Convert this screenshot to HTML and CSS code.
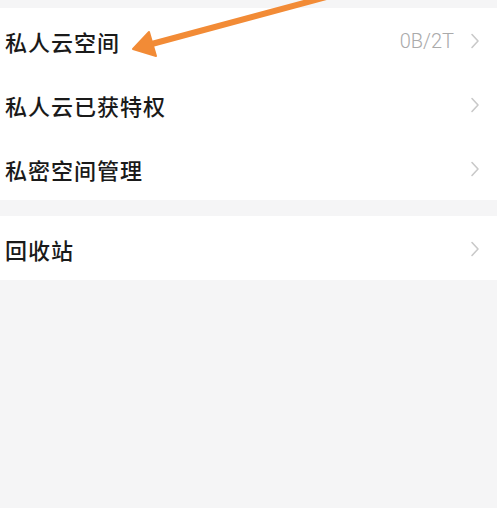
FILE: index.html
```html
<!DOCTYPE html>
<html lang="zh-CN">
<head>
<meta charset="utf-8">
<title>私人云</title>
<link rel="stylesheet" href="styles.css">
</head>
<body>
<div class="page">
  <div class="card">
    <div class="row">
      <span class="label">私人云空间</span>
      <span class="right"><span class="value">0B/2T</span><svg class="chev" viewBox="0 0 10 16" width="10" height="16"><path d="M2 1.5 L8 8 L2 14.5" fill="none" stroke="#c9c9c9" stroke-width="1.6" stroke-linecap="round" stroke-linejoin="round"/></svg></span>
    </div>
    <div class="row">
      <span class="label">私人云已获特权</span>
      <span class="right"><svg class="chev" viewBox="0 0 10 16" width="10" height="16"><path d="M2 1.5 L8 8 L2 14.5" fill="none" stroke="#c9c9c9" stroke-width="1.6" stroke-linecap="round" stroke-linejoin="round"/></svg></span>
    </div>
    <div class="row">
      <span class="label">私密空间管理</span>
      <span class="right"><svg class="chev" viewBox="0 0 10 16" width="10" height="16"><path d="M2 1.5 L8 8 L2 14.5" fill="none" stroke="#c9c9c9" stroke-width="1.6" stroke-linecap="round" stroke-linejoin="round"/></svg></span>
    </div>
  </div>
  <div class="card">
    <div class="row">
      <span class="label">回收站</span>
      <span class="right"><svg class="chev" viewBox="0 0 10 16" width="10" height="16"><path d="M2 1.5 L8 8 L2 14.5" fill="none" stroke="#c9c9c9" stroke-width="1.6" stroke-linecap="round" stroke-linejoin="round"/></svg></span>
    </div>
  </div>
  <svg class="arrow" viewBox="0 0 340 70" width="340" height="70">
    <line x1="330" y1="-4" x2="148" y2="45" stroke="#f28b36" stroke-width="6" stroke-linecap="round"/>
    <polygon points="133,49 149,32 156,56" fill="#f28b36" stroke="#f28b36" stroke-width="2" stroke-linejoin="round"/>
  </svg>
</div>
</body>
</html>
```
FILE: styles.css
```css
html, body {
  margin: 0;
  padding: 0;
  background: #f5f5f6;
}
.page {
  position: relative;
  width: 497px;
  min-height: 508px;
  padding-top: 8px;
  display: flex;
  flex-direction: column;
  gap: 16px;
  box-sizing: border-box;
}
.card {
  background: #ffffff;
  display: flex;
  flex-direction: column;
}
.row {
  height: 64px;
  box-sizing: border-box;
  padding: 1px 17px 0 5px;
  display: flex;
  align-items: center;
  justify-content: space-between;
}
.label {
  font-family: "Noto Sans CJK SC", "Noto Sans", sans-serif;
  font-size: 22px;
  font-weight: 500;
  letter-spacing: 1px;
  color: #1a1a1a;
}
.right {
  display: flex;
  align-items: center;
  gap: 16px;
}
.value {
  font-family: Roboto, "Liberation Sans", sans-serif;
  font-size: 20px;
  font-weight: 300;
  color: #aaaaaa;
}
.chev {
  display: block;
}
.arrow {
  position: absolute;
  left: 0;
  top: 0;
  pointer-events: none;
}
```
